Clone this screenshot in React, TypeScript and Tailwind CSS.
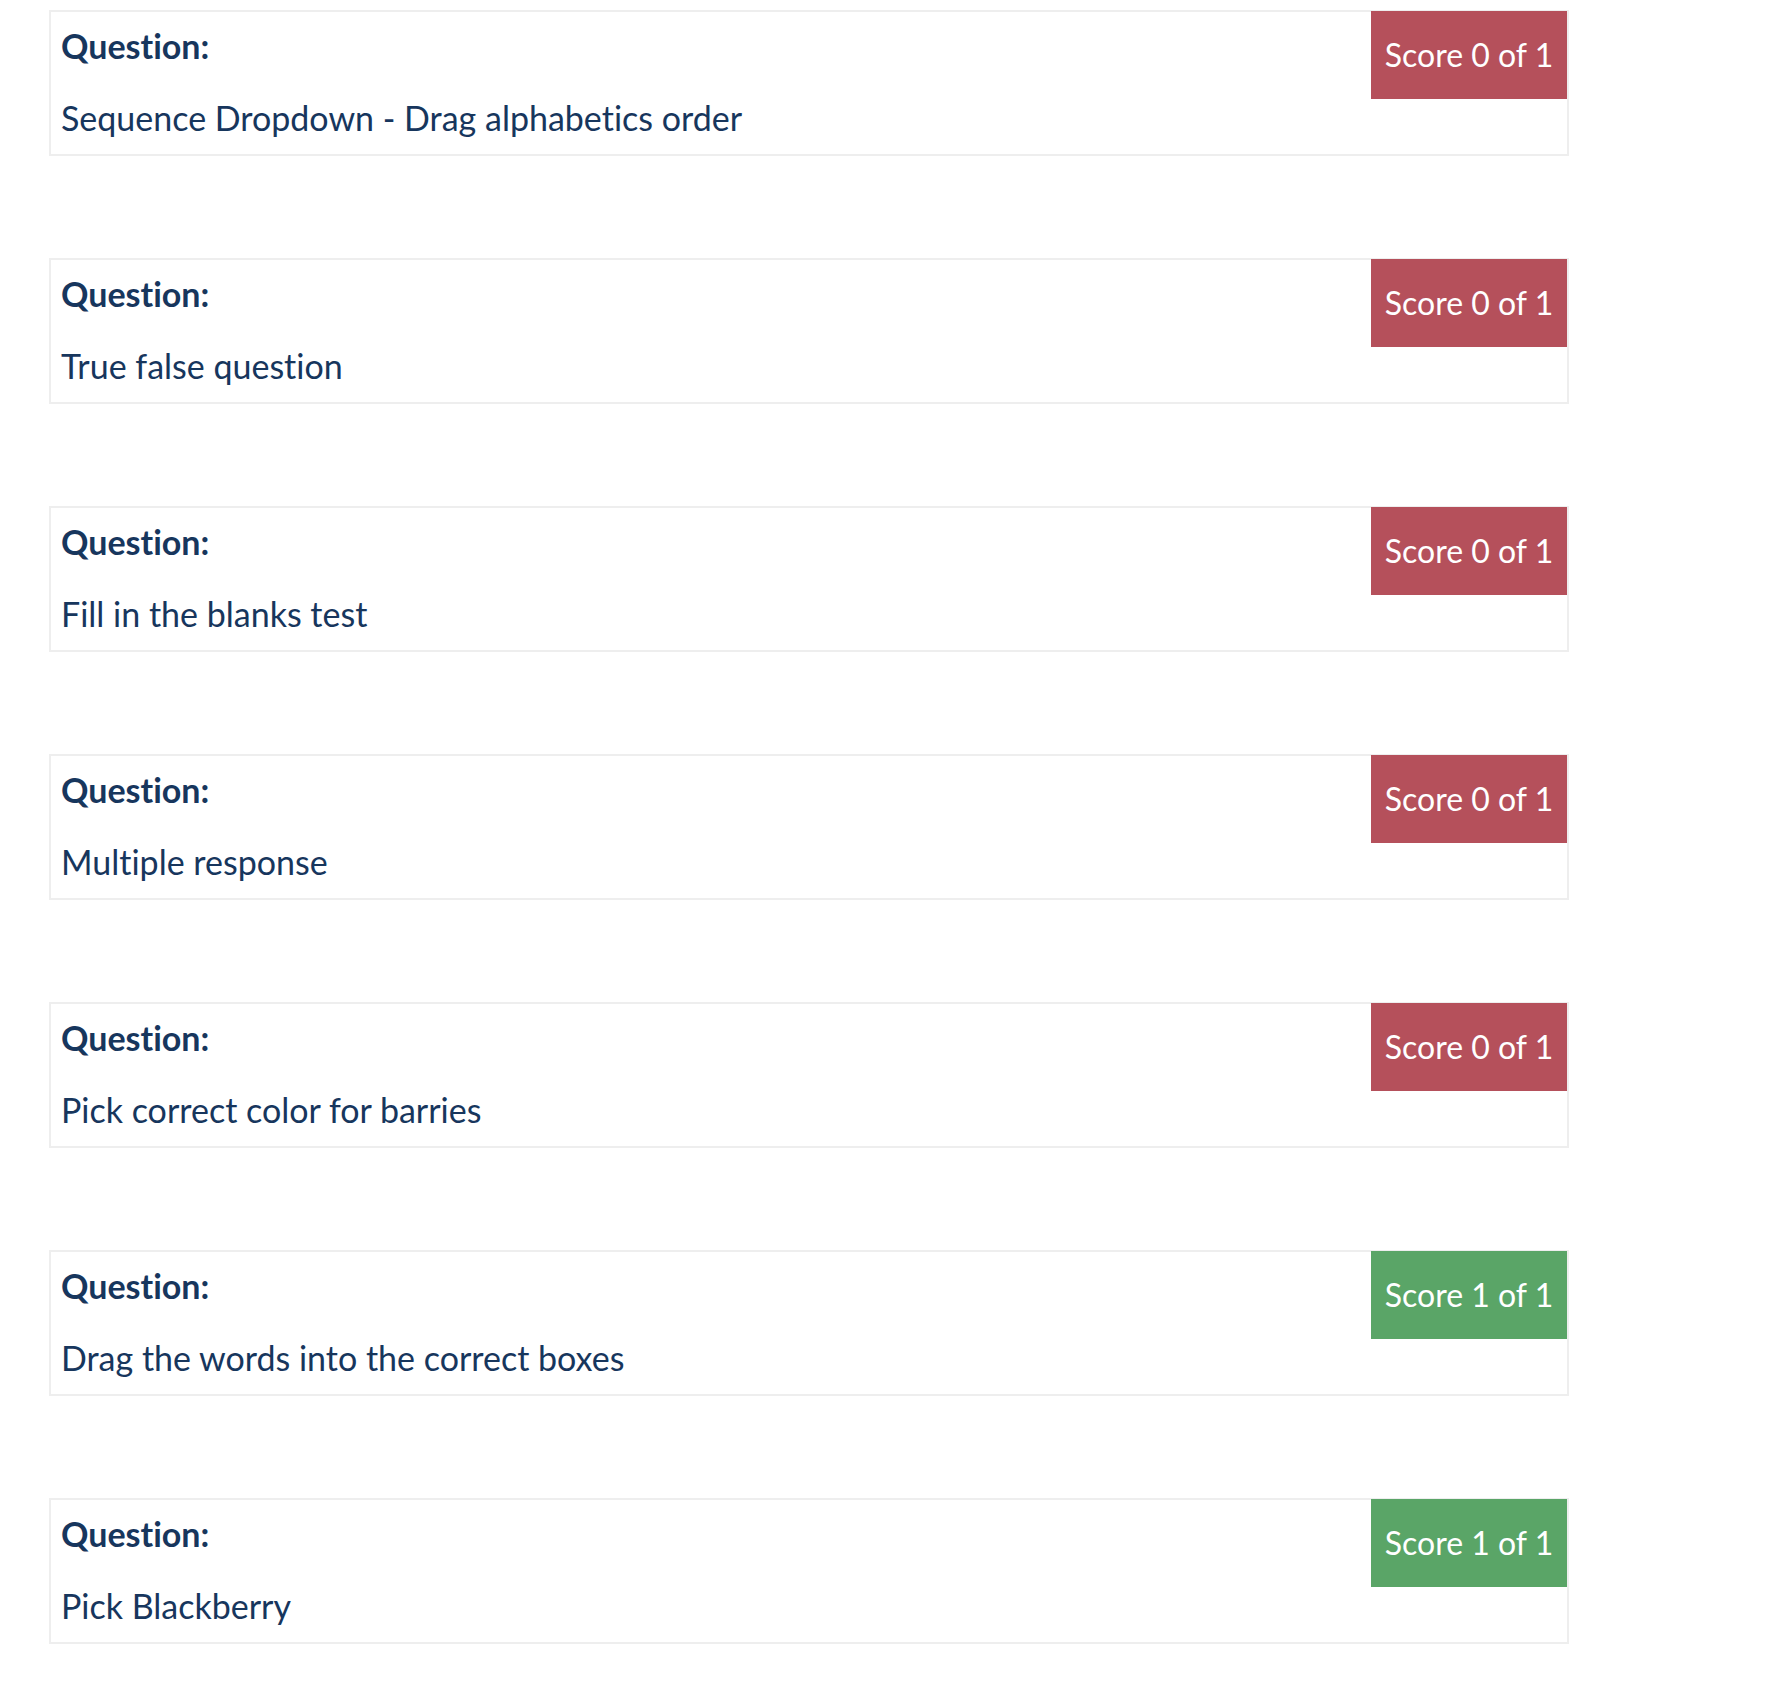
const results = [
  { question: 'Sequence Dropdown - Drag alphabetics order', score: 0, total: 1 },
  { question: 'True false question', score: 0, total: 1 },
  { question: 'Fill in the blanks test', score: 0, total: 1 },
  { question: 'Multiple response', score: 0, total: 1 },
  { question: 'Pick correct color for barries', score: 0, total: 1 },
  { question: 'Drag the words into the correct boxes', score: 1, total: 1 },
  { question: 'Pick Blackberry', score: 1, total: 1 },
];

function ResultCard({ question, score, total }: { question: string; score: number; total: number }) {
  const passed = score === total;
  return (
    <div className="flex items-start justify-between border-2 border-[#eeeeee] bg-white">
      <div className="pl-[10px] pt-[14px] pb-[16px]">
        <div className="text-[34px] leading-[40px] font-bold text-[#17365d]">Question:</div>
        <div className="mt-[32px] text-[34px] leading-[40px] text-[#17365d]">{question}</div>
      </div>
      {/* Score badge */}
      <div
        className={`-mt-px flex h-[88px] w-[196px] items-center justify-center text-[32px] text-white ${
          passed ? 'bg-[#5aa567]' : 'bg-[#b5505b]'
        }`}
      >
        Score {score} of {total}
      </div>
    </div>
  );
}

export default function App() {
  return (
    <div
      className="min-h-screen bg-white pl-[49px] pt-[10px] [font-variant-ligatures:none]"
      style={{ fontFamily: 'Lato, "Noto Sans", sans-serif' }}
    >
      <div className="flex w-[1520px] flex-col gap-[102px]">
        {results.map(r => (
          <ResultCard key={r.question} {...r} />
        ))}
      </div>
    </div>
  );
}
